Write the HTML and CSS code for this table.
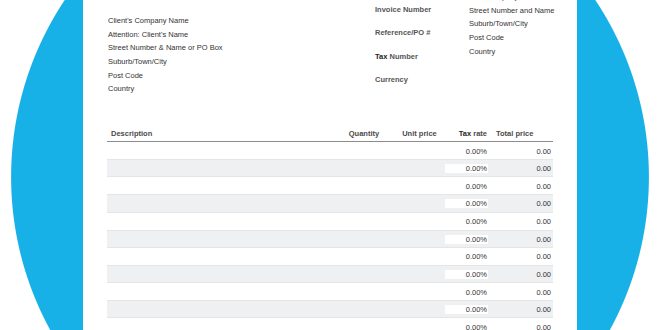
FILE: index.html
```html
<!DOCTYPE html>
<html lang="en">
<head>
    <meta charset="UTF-8">
    <meta name="viewport" content="width=device-width, initial-scale=1.0">
    <title>Invoice Template</title>
    <link rel="stylesheet" href="styles.css">
</head>
<body>
    <div class="sheet">
        <div class="head">
            <div class="bill-to">
                <p class="line cut">Invoice To: Client Details</p>
                <div class="block">
                    <p class="line">Client's Company Name</p>
                    <p class="line">Attention: Client's Name</p>
                    <p class="line">Street Number &amp; Name or PO Box</p>
                    <p class="line">Suburb/Town/City</p>
                    <p class="line">Post Code</p>
                    <p class="line">Country</p>
                </div>
            </div>
            <div class="meta">
                <p class="label">Invoice Number</p>
                <p class="label">Reference/PO #</p>
                <p class="label"><span class="dark">Tax</span> Number</p>
                <p class="label">Currency</p>
            </div>
            <div class="from">
                <p class="line">Your Company Name Ltd</p>
                <p class="line">Street Number and Name</p>
                <p class="line">Suburb/Town/City</p>
                <p class="line">Post Code</p>
                <p class="line">Country</p>
            </div>
        </div>

        <div class="items">
            <div class="row th">
                <div class="desc">Description</div>
                <div class="qty">Quantity</div>
                <div class="unit">Unit price</div>
                <div class="tax"><span class="dark">Tax</span> rate</div>
                <div class="total">Total price</div>
            </div>
            <div class="row"><div></div><div></div><div></div><div class="tax"><span>0.00%</span></div><div class="total">0.00</div></div>
            <div class="row alt"><div></div><div></div><div></div><div class="tax"><span>0.00%</span></div><div class="total">0.00</div></div>
            <div class="row"><div></div><div></div><div></div><div class="tax"><span>0.00%</span></div><div class="total">0.00</div></div>
            <div class="row alt"><div></div><div></div><div></div><div class="tax"><span>0.00%</span></div><div class="total">0.00</div></div>
            <div class="row"><div></div><div></div><div></div><div class="tax"><span>0.00%</span></div><div class="total">0.00</div></div>
            <div class="row alt"><div></div><div></div><div></div><div class="tax"><span>0.00%</span></div><div class="total">0.00</div></div>
            <div class="row"><div></div><div></div><div></div><div class="tax"><span>0.00%</span></div><div class="total">0.00</div></div>
            <div class="row alt"><div></div><div></div><div></div><div class="tax"><span>0.00%</span></div><div class="total">0.00</div></div>
            <div class="row"><div></div><div></div><div></div><div class="tax"><span>0.00%</span></div><div class="total">0.00</div></div>
            <div class="row alt"><div></div><div></div><div></div><div class="tax"><span>0.00%</span></div><div class="total">0.00</div></div>
            <div class="row"><div></div><div></div><div></div><div class="tax"><span>0.00%</span></div><div class="total">0.00</div></div>
        </div>
    </div>
</body>
</html>
```

FILE: styles.css
```css
html, body {
    margin: 0;
    height: 330px;
    overflow: hidden;
}

body {
    font-family: "Liberation Sans", Arial, sans-serif;
    font-size: 7.5px;
    color: #333;
    /* big blue disc behind the invoice */
    background: radial-gradient(circle 319px at 330px 177px, #17b1e7 318.4px, #fff 319.4px);
}

p {
    margin: 0;
}

.sheet {
    width: 446px;
    height: 330px;
    margin: 0 auto;
    padding: 0 24px;
    background: #fff;
    overflow: hidden;
}

.head {
    display: grid;
    grid-template-columns: 268px 94px 1fr;
    height: 136px;
    margin-top: -10px;
}

.line {
    line-height: 13.7px;
    white-space: nowrap;
}

.bill-to {
    padding-left: 1px;
}

.bill-to .block {
    margin-top: 10.2px;
}

.meta {
    padding-top: 7.6px;
}

.label {
    line-height: 23.5px;
    font-weight: bold;
    color: #555;
    white-space: nowrap;
}

.dark {
    color: #1e1e1e;
}

.items {
    width: 446px;
}

.row {
    display: grid;
    grid-template-columns: 235px 46px 57px 45px 63px;
    height: 17px;
    box-sizing: border-box;
    align-items: center;
    white-space: nowrap;
}

.row.alt {
    height: 18.3px;
    background: #eff0f1;
    border-top: 1px solid #e4e5e6;
    border-bottom: 1px solid #e4e5e6;
}

.row.th {
    height: 16px;
    font-weight: bold;
    color: #4a4a4a;
    border-bottom: 1px solid #8c8c8c;
}

.th .desc {
    padding-left: 4px;
}

.th .qty {
    text-align: center;
    padding-right: 2px;
}

.th .unit {
    text-align: center;
    padding-left: 6px;
}

.th .tax {
    text-align: right;
    padding-right: 3px;
}

.tax span {
    display: block;
    margin-right: 2px;
    padding-right: 1px;
    text-align: right;
    line-height: 9px;
    margin-top: 1px;
}

.th .tax span {
    display: inline;
    margin: 0;
    padding: 0;
    line-height: normal;
}

.alt .tax span {
    background: #fff;
}

.row .total {
    text-align: right;
    padding-right: 2px;
    padding-top: 1px;
}

.th .total {
    text-align: left;
    padding-left: 6px;
    padding-top: 0;
}
```
